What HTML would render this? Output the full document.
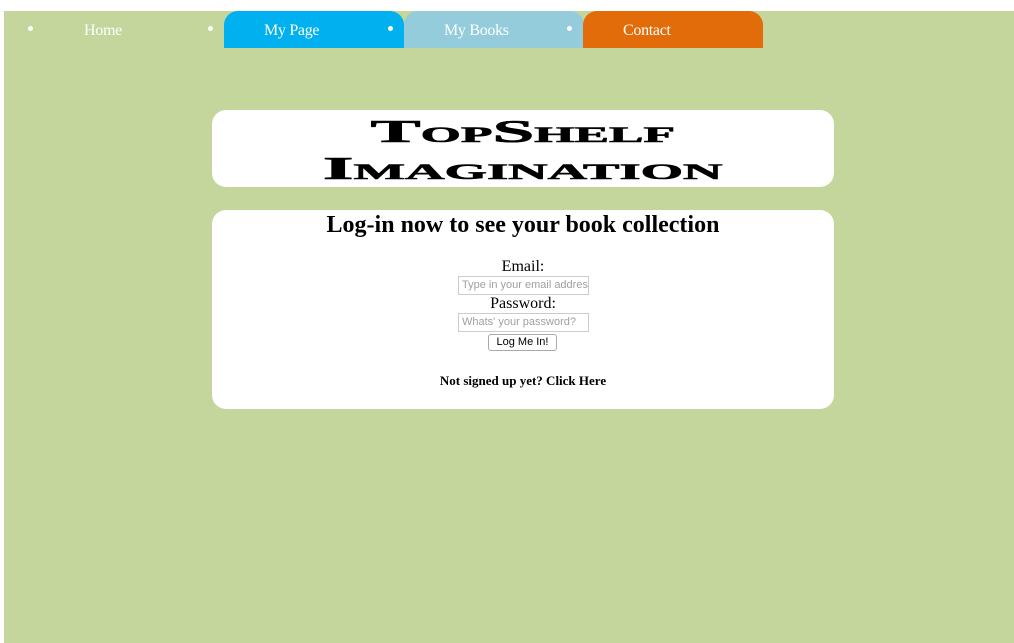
<!DOCTYPE html>
<html><head><style>
body{margin:0;width:1014px;height:643px;background:#fff;overflow:hidden;font-family:"Liberation Serif",serif;position:relative}
.bg{position:absolute;left:4px;top:11px;width:1010px;height:632px;background:#c4d69c}
.tab{position:absolute;top:11px;height:37px;width:180px;color:#fff;font-size:16px;line-height:39px;text-align:left;padding-left:40px;box-sizing:border-box;border-radius:14px 14px 0 0;letter-spacing:-0.3px}
.dot{position:absolute;top:26px;width:5px;height:5px;border-radius:50%;background:#fff}
.box{position:absolute;left:212px;width:622px;background:#fff;border-radius:14px;text-align:center}
.t{position:absolute;left:0;width:622px;text-align:center;font-weight:bold;font-variant:small-caps;font-size:32px;line-height:32px;color:#000;-webkit-text-stroke:0.6px #000}
.t span{display:inline-block}
.lbl{position:absolute;left:0;width:622px;text-align:center;font-size:16px;line-height:18px}
.in{position:absolute;left:246px;border:1px solid #ccc;font-family:"Liberation Sans",sans-serif;font-size:11px;color:#a0a0a0;line-height:17px;text-align:left;padding-left:3px;box-sizing:border-box;width:131px;height:19px;overflow:hidden;white-space:nowrap}
</style></head><body>
<div class="bg"></div>
<div class="dot" style="left:28px"></div>
<div class="dot" style="left:208px"></div>
<div class="tab" style="left:44px;">Home</div>
<div class="tab" style="left:224px;background:#00b0ef">My Page</div>
<div class="dot" style="left:388px;z-index:2"></div>
<div class="tab" style="left:404px;background:#94ccdc">My Books</div>
<div class="dot" style="left:567px;z-index:2"></div>
<div class="tab" style="left:583px;background:#e36c0a">Contact</div>

<div class="box" style="top:110px;height:77px">
 <div class="t" style="top:5px"><span style="transform:scaleX(2.35)">TopShelf</span></div>
 <div class="t" style="top:42px"><span style="transform:scaleX(2.48)">Imagination</span></div>
</div>

<div class="box" style="top:210px;height:199px">
 <div style="position:absolute;top:1px;left:0;width:622px;font-weight:bold;font-size:24px;line-height:28px">Log-in now to see your book collection</div>
 <div class="lbl" style="top:48px">Email:</div>
 <div class="in" style="top:66px">Type in your email address</div>
 <div class="lbl" style="top:85px">Password:</div>
 <div class="in" style="top:103px">Whats' your password?</div>
 <div style="position:absolute;left:276px;top:124px;width:69px;height:17px;border:1px solid #aaa;border-radius:3px;box-sizing:border-box;font-family:'Liberation Sans',sans-serif;font-size:11px;line-height:15px;text-align:center;background:#fff">Log Me In!</div>
 <div style="position:absolute;top:163px;left:0;width:622px;font-weight:bold;font-size:13px">Not signed up yet? Click Here</div>
</div>
</body></html>
